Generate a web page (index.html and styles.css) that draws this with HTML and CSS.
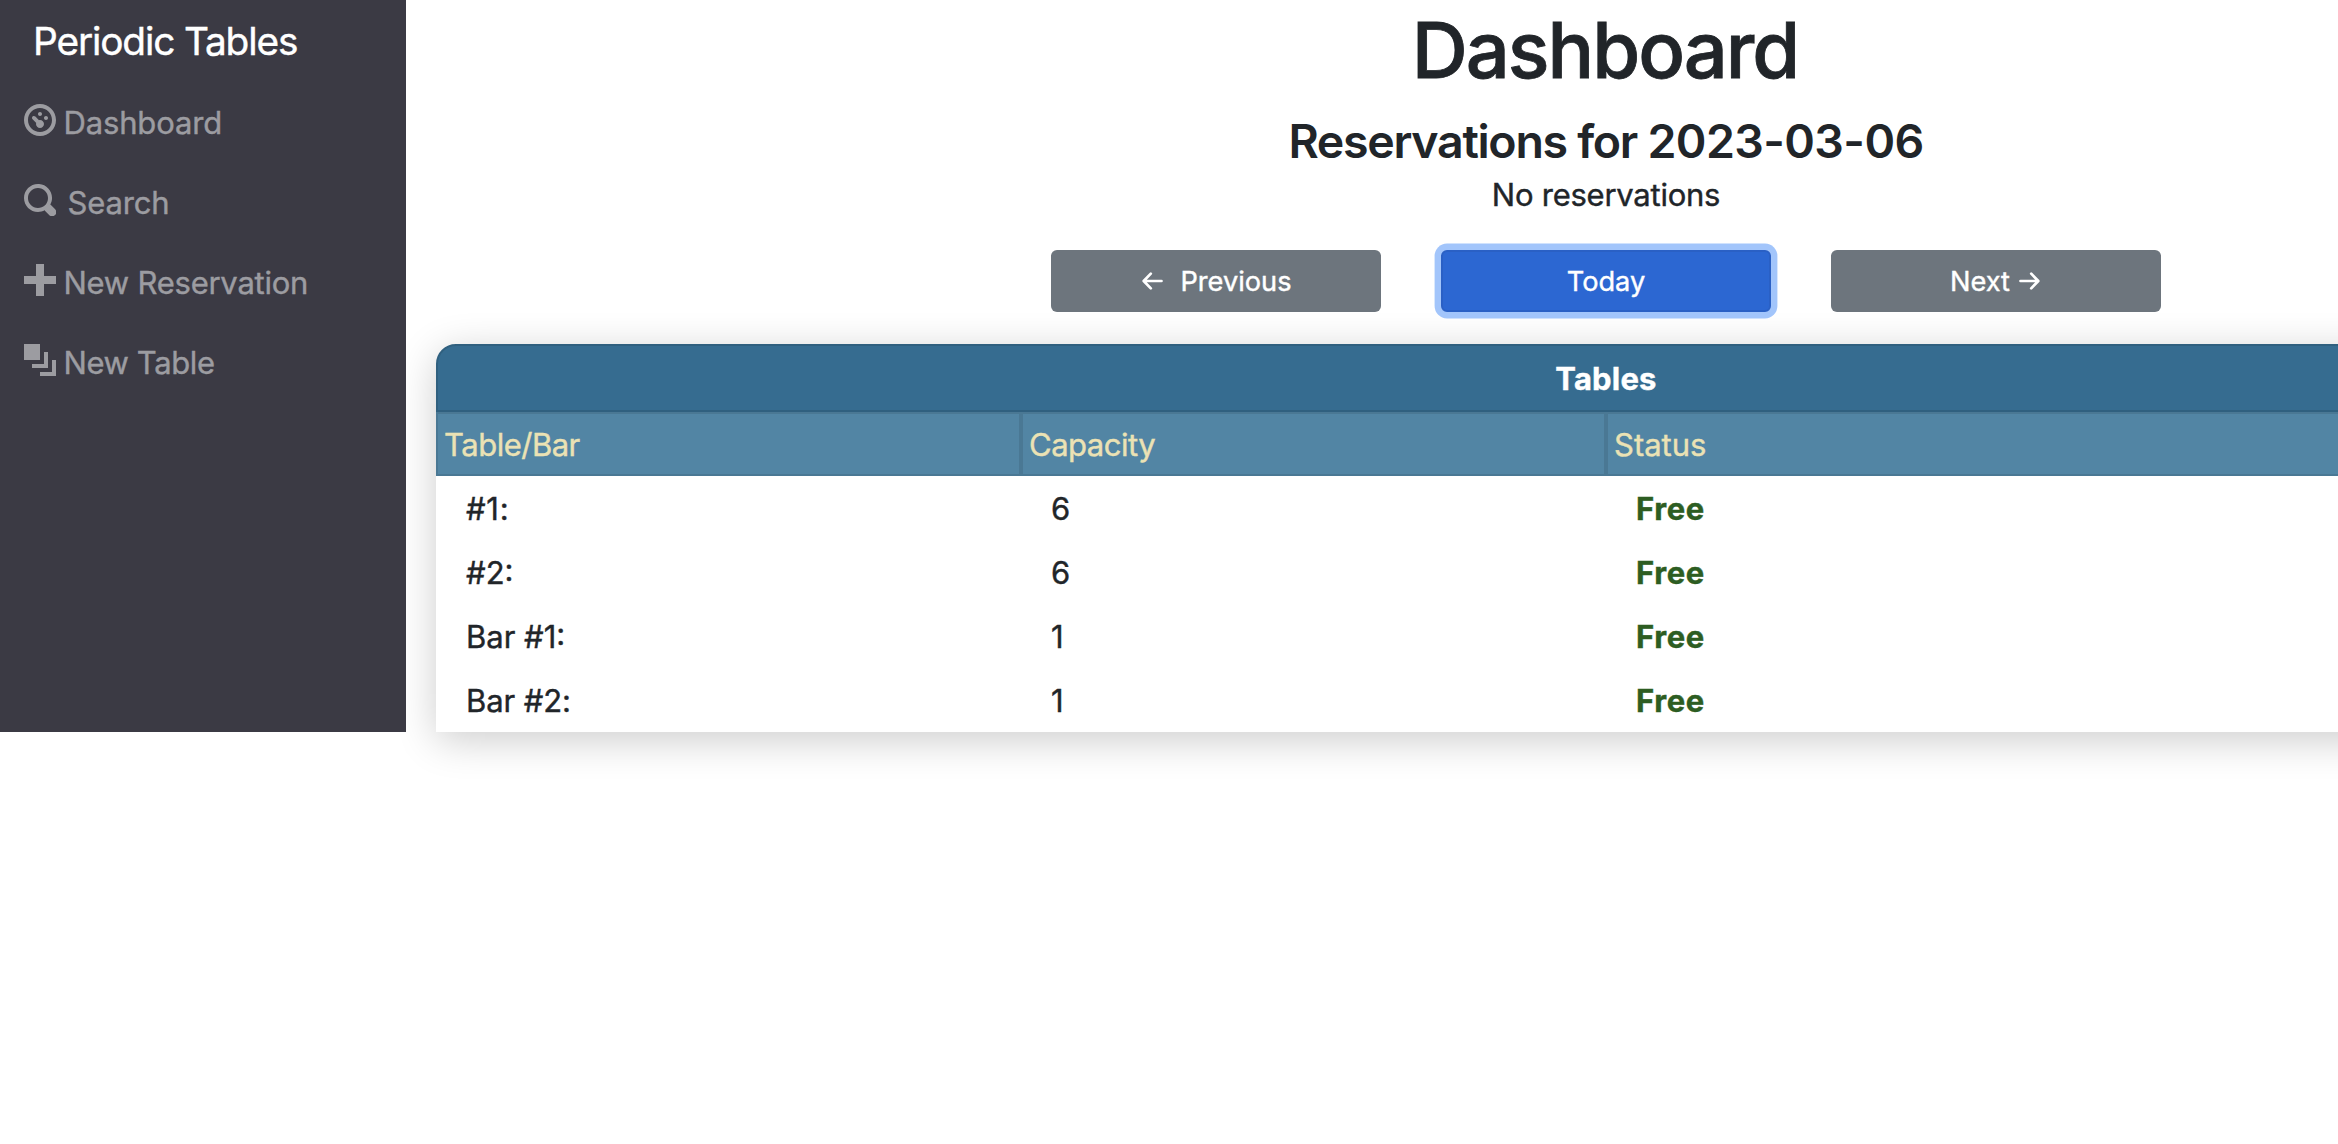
FILE: index.html
```html
<!DOCTYPE html>
<html lang="en">
<head>
<meta charset="utf-8">
<title>Periodic Tables</title>
<link rel="stylesheet" href="styles.css">
</head>
<body>
<div class="layout">
  <nav class="sidebar">
    <a class="brand">Periodic Tables</a>
    <a class="nav-item">
      <svg class="nav-icon" viewBox="0 0 8 8"><path d="M4 0c-2.2 0-4 1.8-4 4s1.8 4 4 4 4-1.8 4-4-1.8-4-4-4zm0 1c1.66 0 3 1.34 3 3s-1.34 3-3 3-3-1.34-3-3 1.34-3 3-3zm0 1c-.28 0-.5.22-.5.5s.22.5.5.5.5-.22.5-.5-.22-.5-.5-.5zm-1.66 1a.5.5 0 0 0-.19.84l.91.91c-.02.08-.06.16-.06.25 0 .55.45 1 1 1s1-.45 1-1-.45-1-1-1c-.09 0-.17.04-.25.06l-.91-.91a.5.5 0 0 0-.44-.16.5.5 0 0 0-.06 0zm3.16 0c-.28 0-.5.22-.5.5s.22.5.5.5.5-.22.5-.5-.22-.5-.5-.5z"/></svg>
      <span>Dashboard</span>
    </a>
    <a class="nav-item nav-search">
      <svg class="nav-icon" viewBox="0 0 8 8"><path d="M3.5 0c-1.93 0-3.5 1.57-3.5 3.5s1.57 3.5 3.5 3.5c.59 0 1.17-.14 1.66-.41a1 1 0 0 0 .13.13l1 1a1.02 1.02 0 1 0 1.44-1.44l-1-1a1 1 0 0 0-.16-.13c.27-.49.44-1.06.44-1.66 0-1.93-1.55-3.5-3.5-3.5zm0 1c1.39 0 2.5 1.11 2.5 2.5 0 .66-.24 1.27-.66 1.72-.01.01-.02.02-.03.03a1 1 0 0 0-.13.13c-.44.4-1.04.63-1.69.63-1.39 0-2.5-1.11-2.5-2.5s1.11-2.5 2.5-2.5z"/></svg>
      <span>Search</span>
    </a>
    <a class="nav-item nav-reservation">
      <svg class="nav-icon" viewBox="0 0 8 8"><path d="M3 0v3h-3v2h3v3h2v-3h3v-2h-3v-3z"/></svg>
      <span>New Reservation</span>
    </a>
    <a class="nav-item nav-table">
      <svg class="nav-icon" viewBox="0 0 8 8"><path d="M0 0v4h4v-4h-4zm5 2v3h-3v1h4v-4h-1zm2 2v3h-3v1h4v-4h-1z"/></svg>
      <span>New Table</span>
    </a>
  </nav>
  <main class="content">
    <h1 class="title">Dashboard</h1>
    <h2 class="subtitle">Reservations for <span class="date">2023-03-06</span></h2>
    <p class="message">No reservations</p>
    <div class="actions">
      <button class="btn btn-previous">
        <svg class="arrow" viewBox="0 0 21 18"><path d="M19.5 9H1.8M8.8 1.6L1.7 9l7.1 7.4"/></svg>
        <span>Previous</span>
      </button>
      <button class="btn btn-today">Today</button>
      <button class="btn btn-next">
        <span>Next</span>
        <svg class="arrow" viewBox="0 0 21 18"><path d="M1.5 9h17.7M12.2 1.6L19.3 9l-7.1 7.4"/></svg>
      </button>
    </div>
    <section class="tables">
      <div class="tables-title">Tables</div>
      <div class="row row-head">
        <div>Table/Bar</div><div>Capacity</div><div class="head-status">Status</div>
      </div>
      <div class="row"><div class="short-name">#1:</div><div>6</div><div class="free">Free</div></div>
      <div class="row"><div>#2:</div><div>6</div><div class="free">Free</div></div>
      <div class="row"><div>Bar #1:</div><div>1</div><div class="free">Free</div></div>
      <div class="row"><div class="bar-name">Bar #2:</div><div>1</div><div class="free">Free</div></div>
    </section>
  </main>
</div>
</body>
</html>
```
FILE: styles.css
```css
* { box-sizing: border-box; }

body {
  margin: 0;
  min-height: 100vh;
  background: #fff;
  color: #212529;
  font-family: Inter, "Liberation Sans", sans-serif;
  font-size: 31px;
  line-height: 48px;
  -webkit-text-stroke: 0.4px currentColor;
  overflow: hidden;
}

.layout { display: flex; height: 732px; }

.sidebar {
  position: relative;
  z-index: 1;
  flex: 0 0 406px;
  display: flex;
  flex-direction: column;
  background: #3b3a44;
}

.brand {
  height: 83px;
  padding-left: 33px;
  color: #fff;
  font-size: 38.8px;
  line-height: 82px;
  letter-spacing: -1.15px;
}

.nav-item {
  display: flex;
  align-items: center;
  gap: 8px;
  height: 80px;
  padding-left: 23.5px;
  color: #9c9ca1;
  letter-spacing: -0.15px;
}
.nav-search { gap: 12px; }
.nav-reservation { letter-spacing: -0.25px; }
.nav-table { letter-spacing: -0.4px; }

.nav-icon {
  width: 32px;
  height: 32px;
  margin-bottom: 6px;
  fill: currentColor;
}

.content {
  flex: 0 0 2340px;
  margin-left: 30px;
  padding-top: 2px;
  text-align: center;
}

.title {
  margin: 0;
  padding-right: 2px;
  font-size: 77.6px;
  font-weight: 500;
  line-height: 96px;
  letter-spacing: -2px;
  -webkit-text-stroke-width: 0.8px;
}

.subtitle {
  margin: 15px 0 0;
  font-size: 46.5px;
  font-weight: 600;
  line-height: 57px;
  letter-spacing: -1.3px;
  -webkit-text-stroke-width: 0;
}
.date { letter-spacing: -0.6px; }

.message { margin: 0; letter-spacing: -0.25px; line-height: 49px; }

.actions {
  display: flex;
  justify-content: center;
  gap: 60px;
  margin: 31px 0 32px;
}

.btn {
  display: flex;
  align-items: center;
  justify-content: center;
  width: 330px;
  height: 62px;
  padding: 0;
  border: 0;
  border-radius: 6px;
  background: #6d757d;
  color: #fff;
  font-family: inherit;
  font-size: 27.2px;
  line-height: 42px;
}
.btn > span { padding-top: 1px; }
.btn-previous { gap: 17px; padding-left: 2px; }
.btn-next { gap: 9px; padding-right: 2px; }
.btn-today {
  padding-top: 1px;
  border: 2px solid #2a60c5;
  background: #2c67d2;
  box-shadow: 0 0 0 6.4px #a2c5fb;
}

.arrow {
  width: 21px;
  height: 18px;
  fill: none;
  stroke: currentColor;
  stroke-width: 2.7;
  stroke-linecap: round;
  stroke-linejoin: round;
}

.tables {
  background: #fff;
  border-radius: 20px 20px 0 0;
  box-shadow: 0 8px 40px rgba(0, 0, 0, 0.2);
}

.tables-title {
  height: 68px;
  border: 2px solid #30607f;
  border-radius: 20px 20px 0 0;
  background: #366c90;
  color: #fff;
  font-weight: 700;
  line-height: 65px;
  letter-spacing: 0.2px;
}

.row {
  display: grid;
  grid-template-columns: 585px 585px 1170px;
  height: 64px;
  line-height: 65px;
  text-align: left;
}
.row > div { padding-left: 30px; }

.row-head > div {
  height: 64px;
  padding-left: 6px;
  border: 2px solid #4a7894;
  background: #5285a4;
  color: #ebe2b4;
  line-height: 61px;
  letter-spacing: -0.5px;
}
.row-head > .head-status { letter-spacing: 0; }

.short-name { letter-spacing: 0.7px; }
.bar-name { letter-spacing: -0.1px; }
.row > .free { color: #2d5d22; font-weight: 700; letter-spacing: 0.6px; }
```
